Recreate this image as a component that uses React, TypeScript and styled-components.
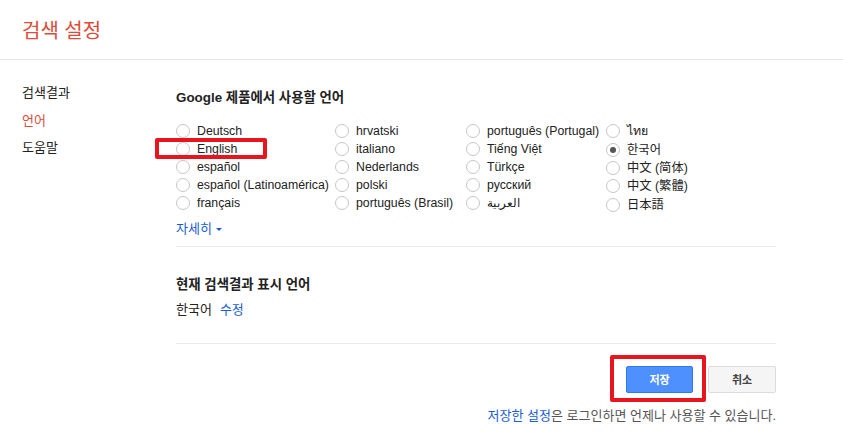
import React from 'react';
import styled, { createGlobalStyle } from 'styled-components';

const GlobalStyle = createGlobalStyle`
  html, body {
    margin: 0;
    padding: 0;
    background: #fff;
  }
  body {
    font-family: "Liberation Sans", Arial, "Noto Sans CJK KR", sans-serif;
    font-size: 13px;
    color: #222;
  }
`;

const Page = styled.div`
  width: 843px;
  min-height: 437px;
`;

const Header = styled.header`
  height: 59px;
  display: flex;
  align-items: center;
  padding-left: 22px;
  border-bottom: 1px solid #e5e5e5;
`;

const Title = styled.h1`
  margin: 0;
  font-size: 20px;
  font-weight: normal;
  color: #dd4b39;
`;

const Body = styled.div`
  display: flex;
`;

const Nav = styled.nav`
  width: 176px;
  padding: 24px 0 0 22px;
  box-sizing: border-box;
  display: flex;
  flex-direction: column;
  gap: 9px;
`;

const NavItem = styled.div<{ $active?: boolean }>`
  line-height: 18.5px;
  font-size: 13px;
  color: ${p => (p.$active ? '#dd4b39' : '#222')};
`;

const Main = styled.main`
  width: 600px;
  display: flex;
  flex-direction: column;
`;

const Section = styled.section<{ $divider?: boolean }>`
  padding-top: 28px;
  border-top: ${p => (p.$divider ? '1px solid #ebebeb' : 'none')};
`;

const Heading = styled.h2`
  margin: 0;
  font-size: 13.4px;
  font-weight: bold;
  line-height: 20px;
  color: #222;
`;

const LangGrid = styled.div`
  display: grid;
  grid-template-columns: 159px 131px 140px auto;
  margin-top: 14px;
`;

const LangColumn = styled.div<{ $row: number }>`
  display: flex;
  flex-direction: column;

  & > label {
    height: ${p => p.$row}px;
  }
`;

const LangOption = styled.label`
  position: relative;
  display: flex;
  align-items: center;
  gap: 7px;
  height: 18px;
  line-height: 18px;
  font-size: 12.3px;
  white-space: nowrap;
  color: #222;
`;

const Radio = styled.span<{ $checked?: boolean }>`
  width: 12px;
  height: 12px;
  flex: none;
  border: 1px solid #c6c6c6;
  border-radius: 50%;
  background: #fff;
  display: flex;
  align-items: center;
  justify-content: center;

  &::after {
    content: '';
    width: 6px;
    height: 6px;
    border-radius: 50%;
    background: ${p => (p.$checked ? '#555' : 'transparent')};
  }
`;

const MoreLink = styled.a`
  display: inline-flex;
  align-items: center;
  gap: 4px;
  margin-top: 6px;
  line-height: 18px;
  color: #1a5bd6;
  text-decoration: none;
  cursor: pointer;
`;

const Caret = styled.span`
  width: 0;
  height: 0;
  border-left: 3px solid transparent;
  border-right: 3px solid transparent;
  border-top: 3px solid #1a5bd6;
  margin-top: 2px;
`;

const Divider = styled.hr`
  margin: 0;
  border: none;
  border-top: 1px solid #ebebeb;
`;

const CurrentLine = styled.div`
  margin-top: 6px;
  line-height: 18px;
  display: flex;
  gap: 8px;
`;

const EditLink = styled.a`
  color: #1a5bd6;
  text-decoration: none;
  cursor: pointer;
`;

const Actions = styled.div`
  display: flex;
  justify-content: flex-end;
  gap: 15px;
  margin-top: 22px;
`;

const Button = styled.button<{ $variant?: 'primary' | 'secondary' }>`
  position: relative;
  height: 27px;
  min-width: 67px;
  padding: 0 8px;
  border-radius: 2px;
  font-family: inherit;
  font-size: 11px;
  font-weight: bold;
  cursor: pointer;
  ${p =>
    p.$variant === 'primary'
      ? `
    background: #4d90fe;
    border: 1px solid #3079ed;
    color: #fff;
  `
      : `
    background: #f5f5f5;
    border: 1px solid #dcdcdc;
    color: #444;
    min-width: 68px;
  `}
`;

const Footer = styled.p`
  margin: 14px 0 0;
  line-height: 18px;
  text-align: right;
  color: #555;
`;

const FooterLink = styled.a`
  color: #1a5bd6;
  text-decoration: none;
`;

const Highlight = styled.span<{ $left: number; $top: number; $w: number; $h: number }>`
  position: absolute;
  left: ${p => p.$left}px;
  top: ${p => p.$top}px;
  width: ${p => p.$w}px;
  height: ${p => p.$h}px;
  box-sizing: border-box;
  border: 4px solid #e8151f;
  border-radius: 2px;
  pointer-events: none;
`;

const columns: string[][] = [
  ['Deutsch', 'English', 'español', 'español (Latinoamérica)', 'français'],
  ['hrvatski', 'italiano', 'Nederlands', 'polski', 'português (Brasil)'],
  ['português (Portugal)', 'Tiếng Việt', 'Türkçe', 'русский', 'العربية'],
  ['ไทย', '한국어', '中文 (简体)', '中文 (繁體)', '日本語'],
];

const App: React.FC = () => {
  return (
    <Page>
      <GlobalStyle />
      <Header>
        <Title>검색 설정</Title>
      </Header>
      <Body>
        <Nav>
          <NavItem>검색결과</NavItem>
          <NavItem $active>언어</NavItem>
          <NavItem>도움말</NavItem>
        </Nav>
        <Main>
          <Section>
            <Heading>Google 제품에서 사용할 언어</Heading>
            <LangGrid>
              {columns.map((col, ci) => (
                <LangColumn key={ci} $row={ci === 3 ? 18.4 : 18}>
                  {col.map(lang => (
                    <LangOption key={lang}>
                      <Radio $checked={lang === '한국어'} />
                      {lang}
                      {lang === 'English' && (
                        <Highlight $left={-21} $top={-2} $w={112} $h={21} />
                      )}
                    </LangOption>
                  ))}
                </LangColumn>
              ))}
            </LangGrid>
            <MoreLink>
              자세히 <Caret />
            </MoreLink>
          </Section>
          <Section $divider style={{ marginTop: 8 }}>
            <Heading>현재 검색결과 표시 언어</Heading>
            <CurrentLine>
              한국어 <EditLink>수정</EditLink>
            </CurrentLine>
          </Section>
          <Divider style={{ marginTop: 24 }} />
          <Actions>
            <Button $variant="primary">
              저장
              <Highlight $left={-17} $top={-12} $w={96} $h={47} />
            </Button>
            <Button $variant="secondary">취소</Button>
          </Actions>
          <Footer>
            <FooterLink>저장한 설정</FooterLink>은 로그인하면 언제나 사용할 수 있습니다.
          </Footer>
        </Main>
      </Body>
    </Page>
  );
};

export default App;
